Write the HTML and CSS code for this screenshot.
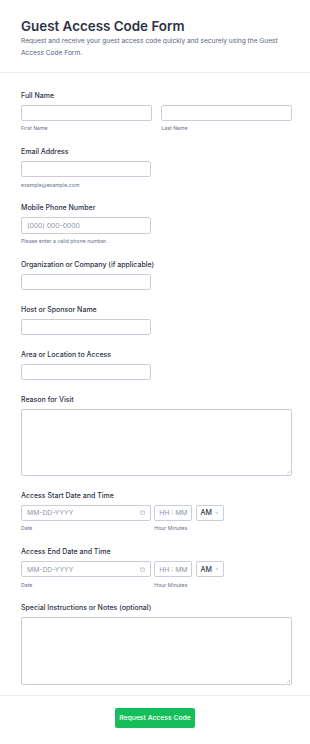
FILE: index.html
```html
<!DOCTYPE html>
<html lang="en">
<head>
    <meta charset="UTF-8">
    <meta name="viewport" content="width=device-width, initial-scale=1.0">
    <title>Guest Access Code Form</title>
    <link rel="stylesheet" href="styles.css">
</head>
<body>
    <form class="form">
        <div class="form-header">
            <h1>Guest Access Code Form</h1>
            <p>Request and receive your guest access code quickly and securely using the Guest Access Code Form.</p>
        </div>

        <ul class="form-fields">
            <li class="field">
                <label class="field-label">Full Name</label>
                <div class="split">
                    <div class="sub">
                        <input type="text" class="input">
                        <span class="sublabel">First Name</span>
                    </div>
                    <div class="sub">
                        <input type="text" class="input">
                        <span class="sublabel">Last Name</span>
                    </div>
                </div>
            </li>
            <li class="field">
                <label class="field-label">Email Address</label>
                <input type="email" class="input half">
                <span class="sublabel">example@example.com</span>
            </li>
            <li class="field">
                <label class="field-label">Mobile Phone Number</label>
                <input type="tel" class="input half" placeholder="(000) 000-0000">
                <span class="sublabel">Please enter a valid phone number.</span>
            </li>
            <li class="field">
                <label class="field-label">Organization or Company (if applicable)</label>
                <input type="text" class="input half">
            </li>
            <li class="field">
                <label class="field-label">Host or Sponsor Name</label>
                <input type="text" class="input half">
            </li>
            <li class="field">
                <label class="field-label">Area or Location to Access</label>
                <input type="text" class="input half">
            </li>
            <li class="field">
                <label class="field-label">Reason for Visit</label>
                <div class="textarea-wrap">
                    <textarea class="input textarea"></textarea>
                </div>
            </li>
            <li class="field">
                <label class="field-label">Access Start Date and Time</label>
                <div class="datetime">
                    <div class="sub date">
                        <div class="input date-input">
                            <span class="placeholder">MM-DD-YYYY</span>
                            <svg class="cal-icon" viewBox="0 0 10 10" width="5" height="5">
                                <rect x="1" y="1.5" width="8" height="7.5" rx="1" fill="none" stroke="#a3a9b8" stroke-width="1"/>
                                <line x1="1" y1="4" x2="9" y2="4" stroke="#a3a9b8" stroke-width="1"/>
                            </svg>
                        </div>
                        <span class="sublabel">Date</span>
                    </div>
                    <div class="sub time">
                        <div class="input time-input"><span class="placeholder">HH : MM</span></div>
                        <span class="sublabel">Hour Minutes</span>
                    </div>
                    <div class="input ampm">
                        <span>AM</span>
                        <svg viewBox="0 0 10 10" width="4" height="4">
                            <path d="M2 3.5 L5 6.5 L8 3.5" fill="none" stroke="#57647e" stroke-width="1.4"/>
                        </svg>
                    </div>
                </div>
            </li>
            <li class="field">
                <label class="field-label">Access End Date and Time</label>
                <div class="datetime">
                    <div class="sub date">
                        <div class="input date-input">
                            <span class="placeholder">MM-DD-YYYY</span>
                            <svg class="cal-icon" viewBox="0 0 10 10" width="5" height="5">
                                <rect x="1" y="1.5" width="8" height="7.5" rx="1" fill="none" stroke="#a3a9b8" stroke-width="1"/>
                                <line x1="1" y1="4" x2="9" y2="4" stroke="#a3a9b8" stroke-width="1"/>
                            </svg>
                        </div>
                        <span class="sublabel">Date</span>
                    </div>
                    <div class="sub time">
                        <div class="input time-input"><span class="placeholder">HH : MM</span></div>
                        <span class="sublabel">Hour Minutes</span>
                    </div>
                    <div class="input ampm">
                        <span>AM</span>
                        <svg viewBox="0 0 10 10" width="4" height="4">
                            <path d="M2 3.5 L5 6.5 L8 3.5" fill="none" stroke="#57647e" stroke-width="1.4"/>
                        </svg>
                    </div>
                </div>
            </li>
            <li class="field">
                <label class="field-label">Special Instructions or Notes (optional)</label>
                <div class="textarea-wrap">
                    <textarea class="input textarea"></textarea>
                </div>
            </li>
        </ul>

        <div class="form-footer">
            <button type="submit" class="submit">Request Access Code</button>
        </div>
    </form>
</body>
</html>
```

FILE: styles.css
```css
body {
    font-family: 'Inter', 'Liberation Sans', sans-serif;
    background-color: #fff;
    color: #2c3345;
    margin: 0;
}
.form {
    width: 310px;
}
.form-header {
    padding: 17px 21px 12.5px;
    border-bottom: 1px solid #ebecf0;
}
.form-header h1 {
    font-size: 13.4px;
    line-height: 18px;
    font-weight: 600;
    margin: 0 0 1px;
    color: #2c3345;
}
.form-header p {
    font-size: 6.6px;
    line-height: 11.6px;
    margin: 0;
    color: #57647e;
}
.form-fields {
    list-style: none;
    margin: 0;
    padding: 18px 18px 10.5px 21px;
    border-bottom: 1px solid #ebecf0;
}
.field {
    display: flex;
    flex-direction: column;
    align-items: flex-start;
    margin-bottom: 14.5px;
}
.field:last-child {
    margin-bottom: 0;
}
.field-label {
    font-size: 7px;
    line-height: 9px;
    font-weight: 500;
    margin-bottom: 5px;
    color: #2c3345;
}
.input {
    box-sizing: border-box;
    height: 16.5px;
    border: 1px solid #c9ceda;
    border-radius: 2px;
    background: #fff;
    font-family: inherit;
    font-size: 6.8px;
    padding: 0 5px;
    margin: 0;
    color: #2c3345;
}
.input::placeholder, .placeholder {
    color: #8f96a8;
    white-space: nowrap;
}
.half {
    width: 130px;
}
.split {
    display: flex;
    gap: 9.6px;
    width: 271.3px;
}
.split .sub {
    flex: 1;
}
.sub {
    display: flex;
    flex-direction: column;
}
.sub .input {
    width: 100%;
}
.sublabel {
    font-size: 5.2px;
    line-height: 8px;
    margin-top: 3.3px;
    color: #68718a;
    white-space: nowrap;
}
.textarea-wrap {
    position: relative;
}
.textarea-wrap::after {
    content: "";
    position: absolute;
    right: 2px;
    bottom: 2px;
    width: 3px;
    height: 3px;
    background: linear-gradient(135deg, transparent 45%, #c9ceda 45%, #c9ceda 60%, transparent 60%, transparent 75%, #c9ceda 75%);
}
.textarea {
    display: block;
    width: 271.3px;
    height: 67.5px;
    resize: none;
    padding: 5px;
}
.datetime {
    display: flex;
    gap: 3.3px;
    align-items: flex-start;
}
.date {
    width: 130px;
}
.date-input, .time-input, .ampm {
    display: flex;
    align-items: center;
}
.date-input {
    justify-content: space-between;
    padding-right: 5px;
}
.cal-icon {
    display: block;
}
.time {
    width: 38px;
}
.time-input {
    padding: 0 4px;
}
.ampm {
    width: 28px;
    gap: 3px;
    padding: 0 4px;
    font-size: 7px;
    font-weight: 500;
    color: #2c3345;
}
.form-footer {
    display: flex;
    justify-content: center;
    padding: 12px 0 17px;
}
.submit {
    width: 80.3px;
    height: 19.6px;
    padding: 0;
    border: none;
    border-radius: 2px;
    background-color: #18bd5b;
    color: #fff;
    font-family: inherit;
    font-size: 6.8px;
    font-weight: 500;
    cursor: pointer;
}
.submit:hover {
    background-color: #16aa52;
}
```
